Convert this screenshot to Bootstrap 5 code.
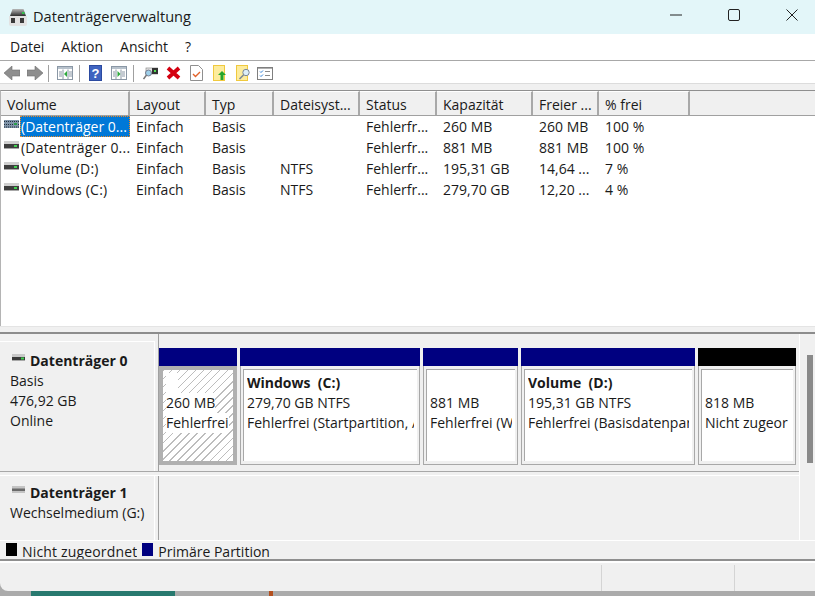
<!DOCTYPE html>
<html lang="de">
<head>
<meta charset="utf-8">
<title>Datenträgerverwaltung</title>
<link href="https://cdn.jsdelivr.net/npm/bootstrap@5.3.0/dist/css/bootstrap.min.css" rel="stylesheet">
<style>
html,body{height:596px;overflow:hidden;background:#ababab;}
body{font-family:"Open Sans","Liberation Sans",sans-serif;font-size:14px;color:#1a1a1a;line-height:20px;}
.win{width:815px;height:591px;background:#f0f0f0;border-bottom-left-radius:8px;overflow:hidden;}
.titlebar{height:34px;background:#e3f6f9;padding-left:9px;}
.title-txt{margin-left:6px;font-size:14.6px;margin-bottom:2px;}
.captgrp{margin-left:auto;margin-right:17px;margin-bottom:4px;gap:46px;}
.menubar{background:#fff;padding-left:10px;gap:17px;border-bottom:1px solid #a8a8a8;height:27px;}
.toolbar{height:23px;background:#fff;border-bottom:1px solid #dcdcdc;padding-top:2px;}
.tool{display:block;flex:none;}
.tsep{width:1px;height:17px;background:#a0a0a0;flex:none;}
.listarea{margin-top:6px;height:236px;background:#fff;border-top:1px solid #8f8f8f;border-left:1px solid #b4b4b4;}
.hdr{height:25px;background:#f0f0f0;border-bottom:1px solid #a0a0a0;}
.hcell{flex:none;height:24px;line-height:25px;padding-left:6px;border-right:2px solid #a8a8a8;border-top:1px solid #fff;white-space:nowrap;overflow:hidden;}
.vols{table-layout:fixed;width:689px;margin:0;}
.vols td{padding:0 0 0 6px;height:21px;line-height:21px;border:0;white-space:nowrap;overflow:hidden;background:transparent;color:#1a1a1a;}
.vols td.namec{padding:0;}
.namewrap{display:flex;align-items:center;height:21px;}
.namewrap svg{flex:none;margin-left:3px;margin-right:1px;margin-top:-5px;}
.sel{flex:1;height:21px;padding-left:1px;overflow:hidden;letter-spacing:.2px;}
.sel-on{background:#0078d7;color:#fff;outline:1px dotted #f08a24;outline-offset:-1px;letter-spacing:0;}
.gap-strip{background:#f0f0f0;border-top:1px solid #e4e4e4;border-bottom:2px solid #8c8c8c;height:8px;}
.diskrow{height:138px;border-bottom:1px solid #a8a8a8;}
.disklbl{width:155px;flex:none;padding:8px 0 0 10px;border-top:1px solid #fff;border-right:1px solid #fff;margin-top:7px;}
.disklbl b{font-weight:700;}
.lbl-h{display:flex;align-items:flex-start;gap:5px;height:20px;margin-left:2px;margin-bottom:1px;}
.lbl-h b{margin-top:1px;}
.vline{width:1px;background:#a0a0a0;flex:none;margin-left:3px;}
.parts{padding:14px 0 0 0;gap:3px;}
.part{flex:none;display:flex;flex-direction:column;}
.pbar{height:18px;flex:none;}
.pbody{height:99px;border:1px solid #a8a8a8;border-top:0;padding:3px 2px 3px 2px;background:#f0f0f0;}
.pinner{height:100%;background:#fff;border-top:1px solid #a8a8a8;border-left:1px solid #a8a8a8;padding:3px 3px 0 3px;overflow:hidden;white-space:nowrap;line-height:20px;}
.pinner div{height:20px;overflow:hidden;}
.psel{border:4px solid #b0b0b0;padding:0;height:99px;background:#fff;}
.hatch{height:100%;background:repeating-linear-gradient(135deg,#bdbdbd 0 1px,#fff 1px 5.7px);padding:3px 0 0 3px;white-space:nowrap;overflow:hidden;}
.hatch div{height:20px;background:#fff;width:max-content;overflow:hidden;max-width:100%;}
.hatch div.blank{width:12px;background:#fff;}
.navy{background:#000080;}
.blk{background:#000;}
.rightgut{width:16px;flex:none;border-left:1px solid #fff;position:relative;}
.thumb{position:absolute;left:7px;top:21px;width:6px;height:108px;background:#8a8a8a;}
.row2{margin-top:3px;border-top:1px solid #fff;}
.row2 .disklbl{padding-top:6px;border-top:0;margin-top:0;}
.legend{height:19px;border-top:1px solid #fff;padding-left:6px;overflow:hidden;}
.sw{width:11px;height:13px;flex:none;margin-top:2px;}
.legtxt{margin-left:5px;margin-right:5px;line-height:22px;height:18px;overflow:hidden;}
.legwide{letter-spacing:.16px;}
.statusbar{border-top:2px solid #8f8f8f;height:32px;}
.statusin{border-top:2px solid #fff;height:30px;padding-top:2px;}
.sdiv{width:1px;height:26px;background:#d4d4d4;}
.teal{position:absolute;left:31px;top:591px;width:144px;height:5px;background:#28796f;}
.orange{position:absolute;left:269px;top:591px;width:4px;height:5px;background:#b4501e;}
</style>
</head>
<body>
<div class="win d-flex flex-column">
  <div class="titlebar d-flex align-items-center">
    <svg class="tool" width="18" height="17" viewBox="0 0 18 17"><defs><linearGradient id="tg" x1="0" y1="0" x2="0" y2="1"><stop offset="0" stop-color="#b8b8b8"/><stop offset="1" stop-color="#2e2e2e"/></linearGradient></defs><path d="M3.500 0h11L17 7H1z" fill="url(#tg)"/><path d="M0 7h18v8a2 2 0 0 1-2 2H2a2 2 0 0 1-2-2z" fill="#e2e2e2"/><rect x="2" y="9" width="4" height="5" fill="#3a3a3a"/><rect x="11" y="9" width="4" height="5" fill="#3a3a3a"/><rect x="13" y="3" width="2.500" height="2" fill="#33c24d"/></svg>
    <span class="title-txt">Datenträgerverwaltung</span>
    <div class="captgrp d-flex">
      <svg class="tool" width="12" height="12" viewBox="0 0 12 12"><path d="M0 6h12" stroke="#222" stroke-width="1"/></svg>
      <svg class="tool" width="12" height="12" viewBox="0 0 12 12"><rect x=".5" y=".5" width="11" height="11" rx="1.500" fill="none" stroke="#222"/></svg>
      <svg class="tool" width="12" height="12" viewBox="0 0 12 12"><path d="M.5.500l11 11M11.500.500l-11 11" stroke="#222" fill="none"/></svg>
    </div>
  </div>
  <div class="menubar d-flex align-items-center">
    <span>Datei</span><span>Aktion</span><span>Ansicht</span><span>?</span>
  </div>
  <div class="toolbar d-flex align-items-center">
    <svg class="tool ms-1" width="16" height="14" viewBox="0 0 16 14"><path d="M8 0v4h8v6H8v4L0 7z" fill="#8e8e8e" stroke="#6e6e6e" stroke-width=".6"/></svg>
    <svg class="tool" style="margin-left:7px" width="16" height="14" viewBox="0 0 16 14"><path d="M8 0v4H0v6h8v4l8-7z" fill="#8e8e8e" stroke="#6e6e6e" stroke-width=".6"/></svg>
    <div class="tsep" style="margin-left:5px"></div>
    <svg class="tool" style="margin-left:8px" width="16" height="14" viewBox="0 0 16 14"><rect x=".5" y=".5" width="15" height="13" fill="#fff" stroke="#8a97a5"/><rect x="1" y="1" width="14" height="2" fill="#b8c2cc"/><path d="M6 3.500v10M11 3.500v10" stroke="#8a97a5"/><path d="M10 5v6L7 8z" fill="#2eaa3c"/><path d="M2 6h3M2 8h3M2 10h3M12 6h3M12 8h3M12 10h3" stroke="#8a97a5"/></svg>
    <div class="tsep" style="margin-left:6px"></div>
    <svg class="tool" style="margin-left:9px" width="13" height="16" viewBox="0 0 13 16"><rect width="13" height="16" fill="#2b4aa0"/><rect x="1" y="1" width="11" height="14" fill="#3f63c0"/><text x="6.500" y="13" font-family="Liberation Sans" font-size="13" font-weight="700" fill="#fff" text-anchor="middle">?</text></svg>
    <svg class="tool" style="margin-left:9px" width="16" height="14" viewBox="0 0 16 14"><rect x=".5" y=".5" width="15" height="13" fill="#fff" stroke="#8a97a5"/><rect x="1" y="1" width="14" height="2" fill="#b8c2cc"/><path d="M5 3.500v10M10 3.500v10" stroke="#8a97a5"/><path d="M6.500 5v6L9.500 8z" fill="#2eaa3c"/><path d="M11 6h3M11 8h3M11 10h3M2 6h2M2 8h2M2 10h2" stroke="#8a97a5"/></svg>
    <div class="tsep" style="margin-left:6px"></div>
    <svg class="tool" style="margin-left:9px" width="15" height="13" viewBox="0 0 15 13"><rect x="3" y="1" width="12" height="6" fill="#e6e6e6" stroke="#8c8c8c" stroke-width=".7"/><rect x="9" y="1" width="6" height="6" fill="#333"/><rect x="11" y="3" width="2" height="2" fill="#55e055"/><circle cx="5.500" cy="6" r="3" fill="#9fd0ea" stroke="#667" stroke-width=".8"/><path d="M3.500 8L.5 12" stroke="#777" stroke-width="1.500"/></svg>
    <svg class="tool" style="margin-left:8px" width="15" height="14" viewBox="0 0 15 14"><path d="M2 2l11 10M13 2L2 12" stroke="#d40010" stroke-width="3.800" fill="none"/></svg>
    <svg class="tool" style="margin-left:9px" width="13" height="16" viewBox="0 0 13 16"><path d="M.5.500h8l4 4v11H.5z" fill="#fff" stroke="#8f8f8f"/><path d="M3 9l2.500 2.500L10 7" stroke="#e2622a" stroke-width="1.400" fill="none"/></svg>
    <svg class="tool" style="margin-left:10px" width="14" height="16" viewBox="0 0 14 16"><rect x=".5" y=".5" width="11" height="15" fill="#fdec9d" stroke="#f0c93e"/><path d="M9 6l4 4h-2.500v5h-3v-5H5z" fill="#26a52c"/></svg>
    <svg class="tool" style="margin-left:9px" width="15" height="16" viewBox="0 0 15 16"><rect x=".5" y=".5" width="11" height="15" fill="#fdec9d" stroke="#f0c93e"/><circle cx="10" cy="7.500" r="3.200" fill="#dceef8" stroke="#7b8794"/><path d="M7.500 10L3.500 14" stroke="#7b8794" stroke-width="1.600"/></svg>
    <svg class="tool" style="margin-left:6px" width="16" height="13" viewBox="0 0 16 13"><rect x=".5" y=".5" width="15" height="12" fill="#fff" stroke="#7f7f7f"/><rect x="1" y="1" width="14" height="1" fill="#b0b0b0"/><path d="M3 4.500l1 1 2-2M3 8.500l1 1 2-2" stroke="#2d7fd8" fill="none"/><path d="M8 4.500h5M8 8.500h5" stroke="#8a8a8a"/></svg>
  </div>
  <div class="listarea d-flex flex-column">
    <div class="hdr d-flex">
      <div class="hcell" style="width:129px">Volume</div>
      <div class="hcell" style="width:76px">Layout</div>
      <div class="hcell" style="width:68px">Typ</div>
      <div class="hcell" style="width:86px">Dateisyst...</div>
      <div class="hcell" style="width:77px">Status</div>
      <div class="hcell" style="width:96px">Kapazität</div>
      <div class="hcell" style="width:66px">Freier ...</div>
      <div class="hcell" style="width:91px">% frei</div>
    </div>
    <table class="table table-borderless vols">
      <colgroup><col style="width:129px"><col style="width:76px"><col style="width:68px"><col style="width:86px"><col style="width:77px"><col style="width:96px"><col style="width:66px"><col style="width:91px"></colgroup>
      <tbody>
      <tr><td class="namec"><div class="namewrap"><svg width="15" height="8" viewBox="0 0 15 8"><rect width="15" height="8" fill="#7f93a8"/><path d="M0 1.500h15M0 4.500h15M0 7h15" stroke="#22303e" stroke-dasharray="1 1"/><rect x="10" y="3" width="3" height="2" fill="#2aa04a"/></svg><div class="sel sel-on">(Datenträger 0...</div></div></td><td>Einfach</td><td>Basis</td><td></td><td>Fehlerfr...</td><td>260 MB</td><td>260 MB</td><td>100 %</td></tr>
      <tr><td class="namec"><div class="namewrap"><svg width="15" height="8" viewBox="0 0 15 8"><rect width="15" height="3" fill="#d0d0d0"/><rect y="3" width="15" height="4" fill="#3e3e3e"/><rect y="7" width="15" height="1" fill="#a8a8a8"/><rect x="10" y="4" width="3" height="2" fill="#40d050"/></svg><div class="sel">(Datenträger 0...</div></div></td><td>Einfach</td><td>Basis</td><td></td><td>Fehlerfr...</td><td>881 MB</td><td>881 MB</td><td>100 %</td></tr>
      <tr><td class="namec"><div class="namewrap"><svg width="15" height="8" viewBox="0 0 15 8"><rect width="15" height="3" fill="#d0d0d0"/><rect y="3" width="15" height="4" fill="#3e3e3e"/><rect y="7" width="15" height="1" fill="#a8a8a8"/><rect x="10" y="4" width="3" height="2" fill="#40d050"/></svg><div class="sel">Volume (D:)</div></div></td><td>Einfach</td><td>Basis</td><td>NTFS</td><td>Fehlerfr...</td><td>195,31 GB</td><td>14,64 ...</td><td>7 %</td></tr>
      <tr><td class="namec"><div class="namewrap"><svg width="15" height="8" viewBox="0 0 15 8"><rect width="15" height="3" fill="#d0d0d0"/><rect y="3" width="15" height="4" fill="#3e3e3e"/><rect y="7" width="15" height="1" fill="#a8a8a8"/><rect x="10" y="4" width="3" height="2" fill="#40d050"/></svg><div class="sel">Windows (C:)</div></div></td><td>Einfach</td><td>Basis</td><td>NTFS</td><td>Fehlerfr...</td><td>279,70 GB</td><td>12,20 ...</td><td>4 %</td></tr>
      </tbody>
    </table>
  </div>
  <div class="gap-strip"></div>
  <div class="d-flex flex-grow-1">
    <div class="flex-grow-1 d-flex flex-column">
      <div class="diskrow d-flex">
        <div class="disklbl">
          <div class="lbl-h"><svg class="mt-1" width="13" height="7" viewBox="0 0 13 7"><rect width="13" height="3" fill="#c8c8c8"/><rect y="3" width="13" height="3" fill="#3a3a3a"/><rect y="6" width="13" height="1" fill="#a8a8a8"/><rect x="9" y="3.500" width="3" height="2" fill="#40d050"/></svg><b>Datenträger 0</b></div>
          <div>Basis</div><div>476,92 GB</div><div>Online</div>
        </div>
        <div class="vline"></div>
        <div class="parts d-flex">
          <div class="part" style="width:78px"><div class="pbar navy"></div><div class="psel"><div class="hatch"><div class="blank">&nbsp;</div><div>260 MB</div><div>Fehlerfrei</div></div></div></div>
          <div class="part" style="width:180px"><div class="pbar navy"></div><div class="pbody"><div class="pinner"><div><b>Windows&nbsp; (C:)</b></div><div>279,70 GB NTFS</div><div>Fehlerfrei (Startpartition, Ab</div></div></div></div>
          <div class="part" style="width:95px"><div class="pbar navy"></div><div class="pbody"><div class="pinner"><div>&nbsp;</div><div>881 MB</div><div>Fehlerfrei (W</div></div></div></div>
          <div class="part" style="width:174px"><div class="pbar navy"></div><div class="pbody"><div class="pinner"><div><b>Volume&nbsp; (D:)</b></div><div>195,31 GB NTFS</div><div>Fehlerfrei (Basisdatenpar</div></div></div></div>
          <div class="part" style="width:98px"><div class="pbar blk"></div><div class="pbody"><div class="pinner"><div>&nbsp;</div><div>818 MB</div><div>Nicht zugeor</div></div></div></div>
        </div>
      </div>
      <div class="row2 d-flex flex-grow-1">
        <div class="disklbl">
          <div class="lbl-h"><svg class="mt-1" width="13" height="7" viewBox="0 0 13 7"><rect width="13" height="7" fill="#c4c4c4"/><rect y="2.500" width="13" height="2.500" fill="#6a6a6a"/></svg><b>Datenträger 1</b></div>
          <div>Wechselmedium (G:)</div>
        </div>
        <div class="vline"></div>
      </div>
    </div>
    <div class="rightgut"><div class="thumb"></div></div>
  </div>
  <div class="legend d-flex">
    <div class="sw blk"></div><span class="legtxt legwide">Nicht zugeordnet</span>
    <div class="sw navy"></div><span class="legtxt">Primäre Partition</span>
  </div>
  <div class="statusbar">
    <div class="statusin d-flex">
      <div class="sdiv" style="margin-left:601px"></div>
      <div class="sdiv" style="margin-left:132px"></div>
    </div>
  </div>
</div>
<div class="teal"></div><div class="orange"></div>
</body>
</html>
